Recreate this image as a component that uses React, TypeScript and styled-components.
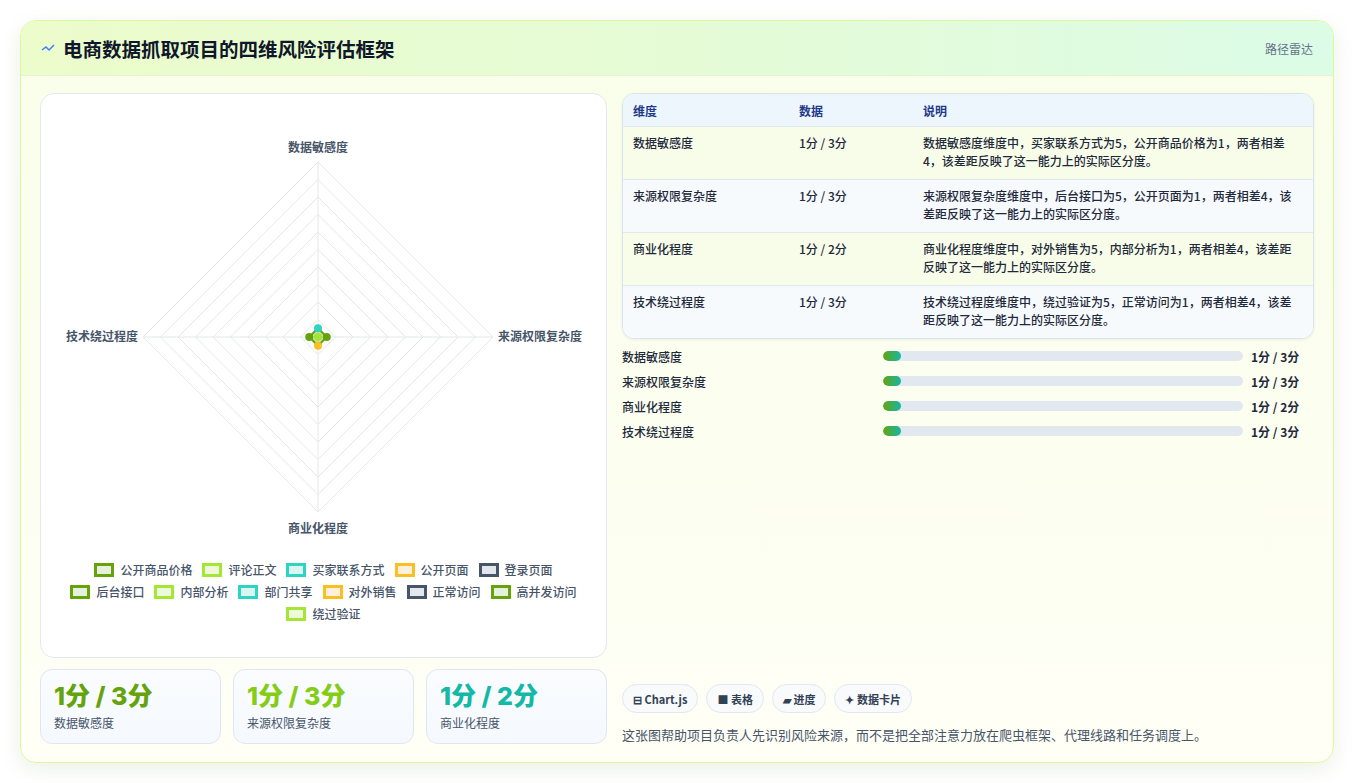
import React from 'react';
import styled, { createGlobalStyle } from 'styled-components';

const Global = createGlobalStyle`
  html, body { margin: 0; background: #ffffff; }
  body { font-family: "Noto Sans CJK SC", "Noto Sans", sans-serif; color: #1e293b; }
  * { box-sizing: border-box; }
`;

const Page = styled.div`
  padding: 20px 20px 20px 20px;
  height: 783px;
`;

const Card = styled.div`
  height: 743px;
  border: 1px solid #d9f99d;
  border-radius: 16px;
  overflow: hidden;
  background: linear-gradient(180deg, #f9fee9 0%, #fffff6 100%);
  box-shadow: 0 6px 20px rgba(100, 130, 60, 0.12);
  display: flex;
  flex-direction: column;
`;

const Header = styled.div`
  height: 55px;
  flex: none;
  display: flex;
  align-items: center;
  justify-content: space-between;
  padding: 0 20px;
  background: linear-gradient(90deg, #ecfccb 0%, #e3fbd8 60%, #dcfce7 100%);
  border-bottom: 1px solid #e2f5cf;
`;

const Title = styled.h1`
  margin: 0;
  font-size: 19.5px;
  font-weight: 700;
  color: #0f172a;
  display: flex;
  align-items: center;
  gap: 8px;
`;

const Tag = styled.span`
  font-size: 12px;
  color: #64748b;
`;

const Body = styled.div`
  flex: 1;
  display: grid;
  grid-template-columns: 567px 1fr;
  gap: 15px;
  padding: 17px 19px 18px 19px;
`;

const Left = styled.div`
  display: flex;
  flex-direction: column;
  gap: 11px;
`;

const ChartPanel = styled.div`
  height: 565px;
  background: #fff;
  border: 1px solid #e2e8f0;
  border-radius: 14px;
  display: flex;
  flex-direction: column;
  align-items: center;
  padding-top: 8px;
`;

const Legend = styled.div`
  display: flex;
  flex-wrap: wrap;
  justify-content: center;
  gap: 3px 10px;
  width: 520px;
  margin-top: 12px;
`;

const LegendItem = styled.span`
  display: flex;
  align-items: center;
  gap: 6px;
  font-size: 12px;
  font-weight: 500;
  color: #475569;
  line-height: 19px;
`;

const Swatch = styled.i<{ $c: string; $bg: string }>`
  width: 20px;
  height: 14px;
  border: 3px solid ${p => p.$c};
  background: ${p => p.$bg};
`;

const Stats = styled.div`
  display: grid;
  grid-template-columns: repeat(3, 1fr);
  gap: 12px;
  width: 567px;
`;

const Stat = styled.div`
  height: 75px;
  background: linear-gradient(180deg, #fafcff, #f5f9fd);
  border: 1px solid #dde7f1;
  border-radius: 12px;
  padding: 8px 13px;
`;

const StatValue = styled.div<{ $c: string }>`
  font-size: 25px;
  font-weight: 800;
  color: ${p => p.$c};
  line-height: 36px;
  font-family: "Inter", "Noto Sans CJK SC", sans-serif;
`;

const StatLabel = styled.div`
  font-size: 12px;
  color: #475569;
`;

const Right = styled.div`
  display: flex;
  flex-direction: column;
`;

const Table = styled.div`
  border: 1px solid #dbe3ee;
  border-radius: 12px;
  overflow: hidden;
  box-shadow: 0 1px 3px rgba(0,0,0,0.06);
  font-size: 12px;
  font-weight: 500;
`;

const Row = styled.div<{ $bg: string }>`
  display: grid;
  grid-template-columns: 166px 124px 1fr;
  padding: 0 10px;
  background: ${p => p.$bg};
  border-top: 1px solid #e2e8f0;
  &:first-child { border-top: none; }
`;

const HeadCell = styled.div`
  height: 32px;
  display: flex;
  align-items: center;
  font-weight: 700;
  color: #1e3a8a;
`;

const Cell = styled.div`
  padding: 7px 0 9px 0;
  line-height: 18px;
  color: #1e293b;
`;

const Bars = styled.div`
  display: flex;
  flex-direction: column;
  gap: 7px;
  margin-top: 8px;
`;

const BarRow = styled.div`
  display: grid;
  grid-template-columns: 261px 360px 1fr;
  align-items: center;
  font-size: 12px;
  font-weight: 500;
  height: 18px;
`;

const Track = styled.div`
  height: 10px;
  background: #e2e8f0;
  border-radius: 5px;
  overflow: hidden;
`;

const Fill = styled.div`
  height: 100%;
  border-radius: 5px;
  background: linear-gradient(90deg, #65a30d, #14b8a6);
`;

const BarValue = styled.div`
  padding-left: 8px;
  font-weight: 700;
`;

const Chips = styled.div`
  margin-top: auto;
  display: flex;
  gap: 8px;
`;

const Chip = styled.span`
  height: 29px;
  padding: 0 10px;
  border: 1px solid #e2e8f0;
  border-radius: 15px;
  background: #f8fafc;
  font-size: 11px;
  font-weight: 700;
  color: #334155;
  display: flex;
  align-items: center;
  gap: 3px;
`;

const Note = styled.p`
  margin: 12px 0 0 0;
  font-size: 13px;
  color: #475569;
`;

const dims = ['数据敏感度', '来源权限复杂度', '商业化程度', '技术绕过程度'];
const vals = ['1分 / 3分', '1分 / 3分', '1分 / 2分', '1分 / 3分'];
const notes = [
  '数据敏感度维度中，买家联系方式为5，公开商品价格为1，两者相差4，该差距反映了这一能力上的实际区分度。',
  '来源权限复杂度维度中，后台接口为5，公开页面为1，两者相差4，该差距反映了这一能力上的实际区分度。',
  '商业化程度维度中，对外销售为5，内部分析为1，两者相差4，该差距反映了这一能力上的实际区分度。',
  '技术绕过程度维度中，绕过验证为5，正常访问为1，两者相差4，该差距反映了这一能力上的实际区分度。',
];

const legend: [string, string, string][] = [
  ['公开商品价格', '#65a30d', '#e7f0dd'], ['评论正文', '#a3e635', '#eef9dc'], ['买家联系方式', '#2dd4bf', '#dcf5f1'],
  ['公开页面', '#fbbf24', '#fdf1dc'], ['登录页面', '#475569', '#e3e6ea'], ['后台接口', '#65a30d', '#e7f0dd'],
  ['内部分析', '#a3e635', '#eef9dc'], ['部门共享', '#2dd4bf', '#dcf5f1'], ['对外销售', '#fbbf24', '#fdf1dc'],
  ['正常访问', '#475569', '#e3e6ea'], ['高并发访问', '#65a30d', '#e7f0dd'], ['绕过验证', '#a3e635', '#eef9dc'],
];

function Radar () :React.ReactElement {
  const cx = 271, cy = 235, R = 175;
  const rings = Array.from({ length: 10 }, (_, i) => (R * (i + 1)) / 10);
  const u = R / 10 * 0.5;
  const dots: [number, number, string][] = [
    [0, -u, '#2dd4bf'], [0, u, '#fbbf24'], [-u, 0, '#65a30d'], [u, 0, '#65a30d'], [0, 0, '#a3e635'],
  ];
  return (
    <svg width="554" height="446" viewBox="0 0 554 446">
      {rings.map(r => (
        <polygon key={r} points={`${cx},${cy - r} ${cx + r},${cy} ${cx},${cy + r} ${cx - r},${cy}`} fill="none" stroke="#e5e7eb" strokeWidth="1" />
      ))}
      <line x1={cx} y1={cy - R} x2={cx} y2={cy + R} stroke="#e5e7eb" />
      <line x1={cx - R} y1={cy} x2={cx + R} y2={cy} stroke="#e5e7eb" />
      <polygon points={`${cx},${cy - u} ${cx + u},${cy} ${cx},${cy + u} ${cx - u},${cy}`} fill="rgba(101,163,13,0.3)" stroke="#65a30d" strokeWidth="2" />
      {dots.map(([dx, dy, c], i) => <circle key={i} cx={cx + dx} cy={cy + dy} r="4" fill={c} />)}
      <g fontSize="12" fill="#475569" fontFamily='"Noto Sans CJK SC", sans-serif' fontWeight="600">
        <text x={cx} y={cy - R - 10} textAnchor="middle">数据敏感度</text>
        <text x={cx + R + 5} y={cy + 4}>来源权限复杂度</text>
        <text x={cx} y={cy + R + 21} textAnchor="middle">商业化程度</text>
        <text x={cx - R - 5} y={cy + 4} textAnchor="end">技术绕过程度</text>
      </g>
    </svg>
  );
}

export default function App () :React.ReactElement {
  return (
    <Page>
      <Global />
      <Card>
        <Header>
          <Title>
            <svg width="14" height="10" viewBox="0 0 14 10"><path d="M1 7 L5 4 L8 7 L13 2" fill="none" stroke="#3b82f6" strokeWidth="1.5" /></svg>
            电商数据抓取项目的四维风险评估框架
          </Title>
          <Tag>路径雷达</Tag>
        </Header>
        <Body>
          <Left>
            <ChartPanel>
              <Radar />
              <Legend>
                {legend.map(([n, c, bg]) => (
                  <LegendItem key={n}><Swatch $c={c} $bg={bg} />{n}</LegendItem>
                ))}
              </Legend>
            </ChartPanel>
            <Stats>
              <Stat><StatValue $c="#65a30d">1分 / 3分</StatValue><StatLabel>数据敏感度</StatLabel></Stat>
              <Stat><StatValue $c="#84cc16">1分 / 3分</StatValue><StatLabel>来源权限复杂度</StatLabel></Stat>
              <Stat><StatValue $c="#14b8a6">1分 / 2分</StatValue><StatLabel>商业化程度</StatLabel></Stat>
            </Stats>
          </Left>
          <Right>
            <Table>
              <Row $bg="#eef6fd">
                <HeadCell>维度</HeadCell><HeadCell>数据</HeadCell><HeadCell>说明</HeadCell>
              </Row>
              {dims.map((d, i) => (
                <Row key={d} $bg={i % 2 === 0 ? '#f8fde9' : '#f7fafc'}>
                  <Cell>{d}</Cell><Cell>{vals[i]}</Cell><Cell>{notes[i]}</Cell>
                </Row>
              ))}
            </Table>
            <Bars>
              {dims.map((d, i) => (
                <BarRow key={d}>
                  <span>{d}</span>
                  <Track><Fill style={{ width: '5%' }} /></Track>
                  <BarValue>{vals[i]}</BarValue>
                </BarRow>
              ))}
            </Bars>
            <Chips>
              <Chip>⊟ Chart.js</Chip>
              <Chip>■ 表格</Chip>
              <Chip>▰ 进度</Chip>
              <Chip>✦ 数据卡片</Chip>
            </Chips>
            <Note>这张图帮助项目负责人先识别风险来源，而不是把全部注意力放在爬虫框架、代理线路和任务调度上。</Note>
          </Right>
        </Body>
      </Card>
    </Page>
  );
}
